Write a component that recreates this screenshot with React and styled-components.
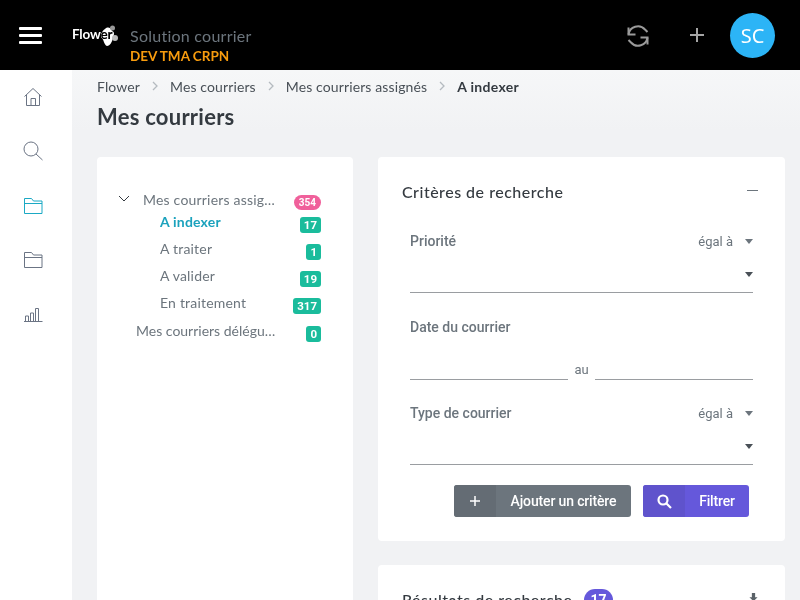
import React from 'react'
import styled, {createGlobalStyle} from 'styled-components'

const GlobalStyle = createGlobalStyle`
  html, body {
    margin: 0;
    height: 100%;
    overflow: hidden;
    background: #f1f2f4;
  }
  * {
    box-sizing: border-box;
  }
`

const Page = styled.div`
  width: 800px;
  height: 600px;
  overflow: hidden;
  display: flex;
  flex-direction: column;
  font-family: "Lato", "Noto Sans", sans-serif;
`

const Header = styled.header`
  flex: 0 0 70px;
  background: #000;
  display: flex;
  align-items: center;
  padding: 0 25px 0 19px;
`

const Burger = styled.div`
  width: 23px;
  height: 17px;
  display: flex;
  flex-direction: column;
  justify-content: space-between;
  margin-right: 29px;

  span {
    display: block;
    height: 3px;
    background: #fff;
    border-radius: 1px;
  }
`

const Logo = styled.div`
  width: 47px;
  height: 24px;
  display: flex;
  align-items: center;
  margin-right: 12px;
  margin-top: -2px;
  padding-left: 1px;
  position: relative;
`

const LogoText = styled.span`
  font: 700 13.500px "Lato", sans-serif;
  letter-spacing: -0.2px;
  color: #fff;
  position: relative;
  z-index: 1;
  mix-blend-mode: difference;
`

const LogoBlob = styled.svg`
  position: absolute;
  left: 29px;
  top: 3px;
`

const AppName = styled.div`
  display: flex;
  flex-direction: column;
  flex: 1;
  padding-top: 21px;
`

const AppTitle = styled.div`
  font-size: 16px;
  line-height: 20px;
  color: #6c757d;
  letter-spacing: 0.25px;
`

const AppEnv = styled.div`
  font-size: 13.500px;
  line-height: 18px;
  margin-top: 1px;
  font-weight: 700;
  color: #f89c0e;
`

const HeaderIcon = styled.svg`
  display: block;
  margin: ${p => p.$top}px ${p => p.$gap}px 0 0;
`

const Avatar = styled.div`
  width: 45px;
  height: 45px;
  border-radius: 50%;
  background: #2cb4f6;
  color: #fff;
  display: flex;
  align-items: center;
  justify-content: center;
  font: 400 20px "Noto Sans", sans-serif;
`

const Body = styled.div`
  flex: 1;
  display: flex;
  min-height: 0;
`

const Sidebar = styled.nav`
  flex: 0 0 72px;
  background: #fff;
  display: flex;
  flex-direction: column;
  align-items: flex-start;
  padding: 17px 0 0 23px;
  gap: 34px;
`

const NavIcon = styled.svg`
  display: block;
  fill: none;
  stroke: ${p => (p.$active ? '#1ba9c4' : '#6b7484')};
  stroke-width: 1;
`

const Main = styled.main`
  flex: 1;
  min-width: 0;
  padding: 7px 15px 0 25px;
  background: linear-gradient(180deg, #f6f7f8 0%, #f1f2f4 60px);
`

const Breadcrumb = styled.div`
  display: flex;
  align-items: center;
  height: 18px;
  font-size: 14px;
  color: #495057;
  letter-spacing: 0.12px;
`

const Crumb = styled.span`
  font-weight: ${p => (p.$current ? 700 : 400)};
  color: ${p => (p.$current ? '#343a40' : '#495057')};
  letter-spacing: ${p => (p.$current ? '0.3px' : 'inherit')};
`

const CrumbSep = styled.span`
  width: 30px;
  display: flex;
  justify-content: center;
`

const PageTitle = styled.h1`
  margin: 7px 0 0;
  font-size: 22px;
  line-height: 30px;
  font-weight: 700;
  color: #343a40;
  letter-spacing: 0.25px;
`

const Columns = styled.div`
  display: flex;
  gap: 25px;
  margin-top: 25px;
`

const TreeCard = styled.section`
  flex: 0 0 256px;
  width: 256px;
  min-width: 0;
  height: 460px;
  background: #fff;
  border-radius: 4px;
  padding: 33px 32px 0 21px;
`

const TreeRow = styled.div`
  display: flex;
  align-items: flex-start;
  height: ${p => p.$height}px;
  padding-left: ${p => p.$indent}px;
  font-size: 14px;
  line-height: 20px;
  color: ${p => (p.$active ? '#1ba2bd' : '#6c757d')};
  font-weight: ${p => (p.$active ? 700 : 400)};
  letter-spacing: ${p => p.$spacing ?? 0.2}px;
`

const Chevron = styled.svg`
  flex: 0 0 12px;
  margin: 5px 13px 0 0;
`

const TreeLabel = styled.span`
  flex: 1;
  min-width: 0;
  overflow: hidden;
  white-space: nowrap;
  text-overflow: ellipsis;
`

const BadgeSlot = styled.div`
  flex: 0 0 44px;
  display: flex;
  justify-content: flex-end;
`

const Badge = styled.span`
  margin-top: ${p => p.$top}px;
  height: ${p => (p.$pink ? 15 : 16)}px;
  padding: 0 ${p => (p.$pink ? 5 : 4)}px;
  border-radius: ${p => (p.$pink ? 7.5 : 3)}px;
  background: ${p => (p.$pink ? '#f0609b' : '#1abc9c')};
  color: #fff;
  letter-spacing: 0;
  font: 700 ${p => (p.$pink ? 10 : 11.5)}px/${p => (p.$pink ? 15 : 16)}px "Roboto", sans-serif;
`

const RightColumn = styled.div`
  flex: 0 0 407px;
  display: flex;
  flex-direction: column;
  gap: 24px;
`

const Card = styled.section`
  background: #fff;
  border-radius: 4px;
  padding: ${p => p.$padding};
  height: ${p => p.$height}px;
`

const CardHead = styled.div`
  display: flex;
  align-items: center;
  justify-content: space-between;
  height: 20px;
  padding-right: 3px;
`

const CardTitle = styled.h2`
  margin: 0;
  font-size: 16px;
  line-height: 20px;
  font-weight: 500;
  color: #343a40;
  font-family: "Lato", sans-serif;
  letter-spacing: 0.5px;
  display: flex;
  align-items: center;
  gap: 12px;
`

const Collapse = styled.span`
  width: 11px;
  height: 1px;
  background: #6c757d;
  margin-top: -3px;
`

const Form = styled.div`
  padding: 0 8px;
  font-family: "Roboto", sans-serif;
`

const FieldHead = styled.div`
  display: flex;
  align-items: center;
  justify-content: space-between;
  height: 16px;
  margin-top: ${p => p.$top}px;
`

const FieldLabel = styled.label`
  font-size: 14px;
  font-weight: 500;
  color: #6c757d;
`

const Operator = styled.div`
  display: flex;
  align-items: center;
  gap: 12px;
  font-size: 13px;
  color: #6c757d;
`

const Caret = styled.span`
  width: 0;
  height: 0;
  border-left: 4px solid transparent;
  border-right: 4px solid transparent;
  border-top: 5px solid ${p => p.$color};
`

const SelectLine = styled.div`
  height: 43px;
  margin-top: 1px;
  border-bottom: 1px solid #9a9da1;
  display: flex;
  justify-content: flex-end;
  padding-top: 22px;
`

const DateRow = styled.div`
  display: flex;
  align-items: flex-end;
  height: 36px;
  margin-top: 9px;
`

const DateInput = styled.div`
  flex: 1;
  border-bottom: 1px solid #9a9da1;
`

const DateSep = styled.span`
  flex: 0 0 27px;
  text-align: center;
  font-size: 13px;
  line-height: 14px;
  color: #6c757d;
  margin-bottom: 3px;
`

const Actions = styled.div`
  display: flex;
  justify-content: flex-end;
  gap: 12px;
  margin-top: 20px;
  padding-right: 4px;
`

const Button = styled.button`
  height: 32px;
  width: ${p => p.$width}px;
  border: 0;
  padding: 0;
  border-radius: 3px;
  overflow: hidden;
  display: flex;
  background: ${p => p.$color};
  color: #fff;
  font: 500 14px "Roboto", sans-serif;
  letter-spacing: -0.15px;
`

const ButtonIcon = styled.span`
  flex: 0 0 42px;
  height: 100%;
  display: flex;
  align-items: center;
  justify-content: center;
  background: ${p => p.$color};
`

const ButtonLabel = styled.span`
  flex: 1;
  line-height: 32px;
  text-align: center;
`

const CountPill = styled.span`
  height: 22px;
  padding: 0 6px;
  border-radius: 11px;
  background: #6558db;
  color: #fff;
  font: 700 14px/22px "Roboto", sans-serif;
  letter-spacing: 0;
`

const DownloadIcon = styled.svg`
  display: block;
  margin-top: -4px;
`

const crumbs = ['Flower', 'Mes courriers', 'Mes courriers assignés']

const tree = [
  {label: 'Mes courriers assignés', count: 354, indent: 0, height: 22, top: 5, pink: true, open: true},
  {label: 'A indexer', count: 17, indent: 42, height: 27, top: 5, active: true},
  {label: 'A traiter', count: 1, indent: 42, height: 27, top: 5},
  {label: 'A valider', count: 19, indent: 42, height: 27, top: 5},
  {label: 'En traitement', count: 317, indent: 42, height: 28, top: 5},
  {label: 'Mes courriers délégués', count: 0, indent: 18, height: 27, top: 5, spacing: 0},
]

function SelectField({label, top}) {
  return (
    <>
      <FieldHead $top={top}>
        <FieldLabel>{label}</FieldLabel>
        <Operator>égal à <Caret $color="#6c757d" /></Operator>
      </FieldHead>
      <SelectLine><Caret $color="#495057" /></SelectLine>
    </>
  )
}

export default function App() {
  return (
    <Page>
      <GlobalStyle />
      <Header>
        <Burger><span /><span /><span /></Burger>
        <Logo>
          <LogoBlob width="18" height="22" viewBox="0 0 18 22">
            <path d="M5 4C8 1 11 3 12 6c3 1 2 4 1 7-1 4-3 8-6 8-3-1-3-6-5-8C0 10 2 6 5 4z" fill="#fff" />
            <circle cx="12.500" cy="3" r="2.500" fill="#999" />
            <circle cx="15" cy="13" r="3" fill="#bbb" />
          </LogoBlob>
          <LogoText>Flower</LogoText>
        </Logo>
        <AppName>
          <AppTitle>Solution courrier</AppTitle>
          <AppEnv>DEV TMA CRPN</AppEnv>
        </AppName>
        <HeaderIcon $gap={39} $top={2} width="24" height="24" viewBox="0 0 24 24" fill="none" stroke="#9a9a9a" strokeWidth="2">
          <path d="M2.500 10.500A9.500 9.500 0 0 1 19 5.500l2.500 2.500" />
          <path d="M21.500 13.500A9.500 9.500 0 0 1 5 18.500L2.500 16" />
          <path d="M2.500 3.500v7h7M21.500 20.500v-7h-7" />
        </HeaderIcon>
        <HeaderIcon $gap={25} $top={0} width="16" height="16" viewBox="0 0 16 16" fill="none" stroke="#a5a5a5" strokeWidth="2">
          <path d="M8 1v14M1 8h14" />
        </HeaderIcon>
        <Avatar>SC</Avatar>
      </Header>
      <Body>
        <Sidebar>
          <NavIcon width="20" height="20" viewBox="0 0 20 20">
            <path d="M1.500 9.500L10 1.500l8.500 8M3.500 8v10.500h13V8M8 18.500v-7h4.500v7" />
          </NavIcon>
          <NavIcon width="20" height="20" viewBox="0 0 20 20">
            <circle cx="8" cy="8" r="7" />
            <path d="M13 13l6.500 6" />
          </NavIcon>
          <NavIcon $active width="20" height="20" viewBox="0 0 20 20">
            <path d="M1.500 3.500h7l2 2.500h8.500v12.500h-17.500zM1.500 8.500h17.500" />
          </NavIcon>
          <NavIcon width="20" height="20" viewBox="0 0 20 20">
            <path d="M1.500 3.500h7l2 2.500h8.500v12.500h-17.500zM1.500 8.500h17.500" />
          </NavIcon>
          <NavIcon width="20" height="20" viewBox="0 0 20 20">
            <path d="M1 18.500h18.500M2.500 18v-5h3v5M7.500 18v-8h3v8M12.500 18V5.500h3V18" />
          </NavIcon>
        </Sidebar>
        <Main>
          <Breadcrumb>
            {crumbs.map(c => (
              <React.Fragment key={c}>
                <Crumb>{c}</Crumb>
                <CrumbSep>
                  <svg width="6" height="10" viewBox="0 0 6 10" fill="none" stroke="#b5bac0" strokeWidth="1.300"><path d="M1 1l4 4-4 4" /></svg>
                </CrumbSep>
              </React.Fragment>
            ))}
            <Crumb $current>A indexer</Crumb>
          </Breadcrumb>
          <PageTitle>Mes courriers</PageTitle>
          <Columns>
            <TreeCard>
              {tree.map(row => (
                <TreeRow key={row.label} $indent={row.indent} $height={row.height} $active={row.active} $spacing={row.spacing}>
                  {row.open && (
                    <Chevron width="12" height="8" viewBox="0 0 12 8" fill="none" stroke="#343a40">
                      <path d="M1 1l5 5 5-5" />
                    </Chevron>
                  )}
                  <TreeLabel>{row.label}</TreeLabel>
                  <BadgeSlot>
                    <Badge $pink={row.pink} $top={row.top}>{row.count}</Badge>
                  </BadgeSlot>
                </TreeRow>
              ))}
            </TreeCard>
            <RightColumn>
              <Card $padding="25px 24px 0" $height={384}>
                <CardHead>
                  <CardTitle>Critères de recherche</CardTitle>
                  <Collapse />
                </CardHead>
                <Form>
                  <SelectField label="Priorité" top={31} />
                  <FieldHead $top={26}><FieldLabel>Date du courrier</FieldLabel></FieldHead>
                  <DateRow>
                    <DateInput />
                    <DateSep>au</DateSep>
                    <DateInput />
                  </DateRow>
                  <SelectField label="Type de courrier" top={25} />
                  <Actions>
                    <Button $width={177} $color="#6c757d">
                      <ButtonIcon $color="#646c74">
                        <svg width="10" height="10" viewBox="0 0 10 10" stroke="#fff" strokeWidth="1.500"><path d="M5 0v10M0 5h10" /></svg>
                      </ButtonIcon>
                      <ButtonLabel>Ajouter un critère</ButtonLabel>
                    </Button>
                    <Button $width={106} $color="#6558db">
                      <ButtonIcon $color="#5f53cc">
                        <svg width="15" height="15" viewBox="0 0 15 15" fill="none" stroke="#fff" strokeWidth="2.200"><circle cx="6" cy="6" r="4.500" /><path d="M9.500 9.500l4.500 4.500" /></svg>
                      </ButtonIcon>
                      <ButtonLabel>Filtrer</ButtonLabel>
                    </Button>
                  </Actions>
                </Form>
              </Card>
              <Card $padding="25px 24px 0" $height={120}>
                <CardHead>
                  <CardTitle>Résultats de recherche <CountPill>17</CountPill></CardTitle>
                  <DownloadIcon width="9" height="12" viewBox="0 0 11 12" fill="#5a6268">
                    <path d="M3.500 0h4v5h3l-5 5-5-5h3zM0 10.500h11V12H0z" />
                  </DownloadIcon>
                </CardHead>
              </Card>
            </RightColumn>
          </Columns>
        </Main>
      </Body>
    </Page>
  )
}
